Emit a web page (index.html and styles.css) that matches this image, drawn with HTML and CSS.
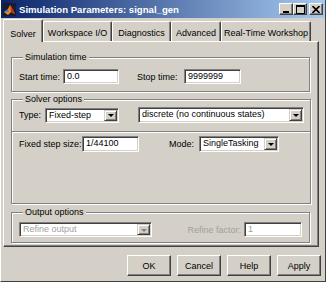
FILE: index.html
```html
<!DOCTYPE html>
<html lang="en">
<head>
    <meta charset="UTF-8">
    <title>Simulation Parameters: signal_gen</title>
    <link rel="stylesheet" href="styles.css">
</head>
<body>
    <div class="window">
        <div class="titlebar">
            <svg class="app-icon" width="13" height="13" viewBox="0 0 13 13">
                <path d="M1 9 L5 6 L7 2 L9 5 L12 11 L8 9 L5 12 Z" fill="#e8901c"/>
                <path d="M7 2 L9 5 L12 11 L8 9 Z" fill="#c0301a"/>
                <path d="M1 9 L5 6 L6 9 Z" fill="#3a7fd0"/>
            </svg>
            <span class="title">Simulation Parameters: signal_gen</span>
            <div class="caption-buttons">
                <span class="cap-btn">
                    <svg width="8" height="7" viewBox="0 0 8 7"><rect x="1" y="5" width="6" height="2" fill="#000"/></svg>
                </span>
                <span class="cap-btn">
                    <svg width="9" height="9" viewBox="0 0 9 9"><rect x="0.5" y="0.5" width="8" height="8" fill="none" stroke="#000"/><rect x="0" y="0" width="9" height="2" fill="#000"/></svg>
                </span>
                <span class="cap-btn cap-close">
                    <svg width="8" height="7" viewBox="0 0 8 7"><path d="M0.5 0 L7.5 7 M7.5 0 L0.5 7" stroke="#000" stroke-width="1.6"/></svg>
                </span>
            </div>
        </div>

        <div class="tabs">
            <div class="tab active">Solver</div>
            <div class="tab tab-ws">Workspace I/O</div>
            <div class="tab tab-diag">Diagnostics</div>
            <div class="tab tab-adv">Advanced</div>
            <div class="tab tab-rtw">Real-Time Workshop</div>
        </div>

        <div class="panel">
            <fieldset class="group group-sim">
                <legend>Simulation time</legend>
                <div class="row">
                    <span class="lbl lbl-start">Start time:</span>
                    <div class="field field-start">0.0</div>
                    <span class="lbl lbl-stop">Stop time:</span>
                    <div class="field field-stop">9999999</div>
                </div>
            </fieldset>

            <fieldset class="group group-solver">
                <legend>Solver options</legend>
                <div class="row">
                    <span class="lbl lbl-type">Type:</span>
                    <div class="field select select-type">
                        <span class="select-text">Fixed-step</span>
                        <span class="drop-btn"></span>
                    </div>
                    <div class="field select select-solver">
                        <span class="select-text">discrete (no continuous states)</span>
                        <span class="drop-btn"></span>
                    </div>
                </div>
                <div class="separator"></div>
                <div class="row row-step">
                    <span class="lbl lbl-step">Fixed step size:</span>
                    <div class="field field-step">1/44100</div>
                    <span class="lbl lbl-mode">Mode:</span>
                    <div class="field select select-mode">
                        <span class="select-text">SingleTasking</span>
                        <span class="drop-btn"></span>
                    </div>
                </div>
            </fieldset>

            <fieldset class="group group-output">
                <legend>Output options</legend>
                <div class="row">
                    <div class="field select select-output disabled">
                        <span class="select-text">Refine output</span>
                        <span class="drop-btn"></span>
                    </div>
                    <span class="lbl lbl-refine disabled">Refine factor:</span>
                    <div class="field field-refine disabled">1</div>
                </div>
            </fieldset>
        </div>

        <div class="buttons">
            <button class="btn btn-default">OK</button>
            <button class="btn">Cancel</button>
            <button class="btn">Help</button>
            <button class="btn">Apply</button>
        </div>
    </div>
</body>
</html>
```

FILE: styles.css
```css
body {
    margin: 0;
    font-family: "Liberation Sans", Arial, sans-serif;
    font-size: 9px;
    color: #000;
    background-color: #d4d0c8;
}
.window {
    width: 326px;
    height: 282px;
    box-sizing: border-box;
    background-color: #d4d0c8;
    border-right: 1px solid #404040;
    border-bottom: 1px solid #404040;
    border-left: 1px solid #ffffff;
}

/* title bar */
.titlebar {
    height: 18px;
    display: flex;
    align-items: center;
    background: linear-gradient(to right, #0a246a, #a6caf0);
    color: white;
    padding-left: 2px;
}
.app-icon {
    margin-right: 3px;
    background-color: #1a1a30;
}
.title {
    font-weight: bold;
    font-size: 9.6px;
}
.caption-buttons {
    margin-left: auto;
    display: flex;
    margin-right: 2px;
}
.cap-btn {
    width: 14px;
    height: 12px;
    box-sizing: border-box;
    background-color: #d4d0c8;
    border: 1px solid;
    border-color: #ffffff #404040 #404040 #ffffff;
    box-shadow: inset -1px -1px 0 #808080;
    display: flex;
    align-items: center;
    justify-content: center;
}
.cap-close {
    margin-left: 2px;
}

/* tabs */
.tabs {
    display: flex;
    align-items: flex-end;
    height: 22px;
    margin-top: 2px;
    padding-left: 2px;
    position: relative;
    z-index: 1;
    margin-bottom: -1px;
}
.tab {
    height: 20px;
    box-sizing: border-box;
    line-height: 23px;
    padding: 0;
    text-align: center;
    white-space: nowrap;
    border-top: 1px solid #ffffff;
    border-left: 1px solid #ffffff;
    border-right: 1px solid #404040;
    box-shadow: inset -1px 0 0 #808080;
    border-radius: 2px 2px 0 0;
    background-color: #d4d0c8;
    margin-bottom: 1px;
}
.tab.active {
    width: 40px;
    height: 23px;
    line-height: 28px;
    margin-bottom: 0;
}
.tab-ws {
    width: 69px;
}
.tab-diag {
    width: 59px;
}
.tab-adv {
    width: 50px;
}
.tab-rtw {
    width: 90px;
}

/* panel */
.panel {
    margin-left: 2px;
    width: 316px;
    height: 206px;
    box-sizing: border-box;
    border: 1px solid;
    border-color: #ffffff #404040 #404040 #ffffff;
    box-shadow: inset -1px -1px 0 #808080;
    padding: 10px 8px 0 7px;
}
.group {
    margin: 0;
    border: 1px solid #808080;
    box-shadow: 1px 1px 0 #ffffff, inset 1px 1px 0 #ffffff;
    padding: 0 6px;
}
.group legend {
    padding: 0 2px;
    margin-left: 5px;
    line-height: 11px;
    background-color: #d4d0c8;
}
.group-sim {
    height: 40px;
    box-sizing: border-box;
    padding-top: 6px;
}
.group-solver {
    margin-top: 2px;
    height: 110px;
    box-sizing: border-box;
    padding-top: 2px;
}
.group-output {
    margin-top: 3px;
    height: 36px;
    box-sizing: border-box;
    padding-top: 4px;
}
.row {
    display: flex;
    align-items: center;
}
.lbl {
    white-space: nowrap;
}
.lbl-start {
    width: 44px;
    margin-left: 1px;
}
.lbl-stop {
    margin-left: 18px;
    width: 47px;
}
.lbl-type {
    width: 26px;
    margin-left: 1px;
}
.lbl-step {
    width: 63px;
    margin-left: 1px;
}
.lbl-mode {
    margin-left: 30px;
    width: 30px;
}
.lbl-refine {
    margin-left: auto;
    margin-right: 3px;
}

/* sunken text fields */
.field {
    height: 15px;
    box-sizing: border-box;
    background-color: #ffffff;
    border: 1px solid;
    border-color: #808080 #ffffff #ffffff #808080;
    box-shadow: inset 1px 1px 0 #404040, inset -1px -1px 0 #d4d0c8;
    padding: 0 3px;
    line-height: 13px;
    white-space: nowrap;
}
.field-start {
    width: 56px;
}
.field-stop {
    width: 57px;
}
.field-step {
    width: 57px;
    height: 16px;
}
.field-refine {
    width: 58px;
    margin-right: 1px;
}
.select {
    display: flex;
    align-items: stretch;
    padding: 0 0 0 3px;
}
.select-text {
    flex: 1;
    overflow: hidden;
}
.drop-btn {
    width: 13px;
    margin: 1px 1px 1px 0;
    box-sizing: border-box;
    background-color: #d4d0c8;
    border: 1px solid;
    border-color: #d4d0c8 #404040 #404040 #d4d0c8;
    box-shadow: inset 1px 1px 0 #ffffff, inset -1px -1px 0 #808080;
    display: flex;
    align-items: center;
    justify-content: center;
}
.drop-btn::after {
    content: "";
    border-left: 3px solid transparent;
    border-right: 3px solid transparent;
    border-top: 3px solid #000;
    margin-top: 1px;
}
.select-type {
    width: 74px;
}
.select-solver {
    width: 166px;
    margin-left: 19px;
    height: 16px;
}
.select-mode {
    width: 80px;
    height: 16px;
}
.select-output {
    width: 133px;
    margin-left: 1px;
}
.disabled {
    color: #a0a0a0;
}
.disabled .drop-btn::after {
    border-top-color: #808080;
}
.separator {
    margin: 8px -6px 3px -6px;
    height: 1px;
    background-color: #808080;
    border-bottom: 1px solid #ffffff;
}

/* dialog buttons */
.buttons {
    display: flex;
    justify-content: flex-end;
    gap: 6px;
    margin-top: 8px;
    padding-right: 4px;
}
.btn {
    width: 44px;
    height: 21px;
    font-family: "Liberation Sans", Arial, sans-serif;
    font-size: 9px;
    color: #000;
    background-color: #d4d0c8;
    border: 1px solid;
    border-color: #ffffff #404040 #404040 #ffffff;
    box-shadow: inset -1px -1px 0 #808080;
    padding: 0;
}
```
